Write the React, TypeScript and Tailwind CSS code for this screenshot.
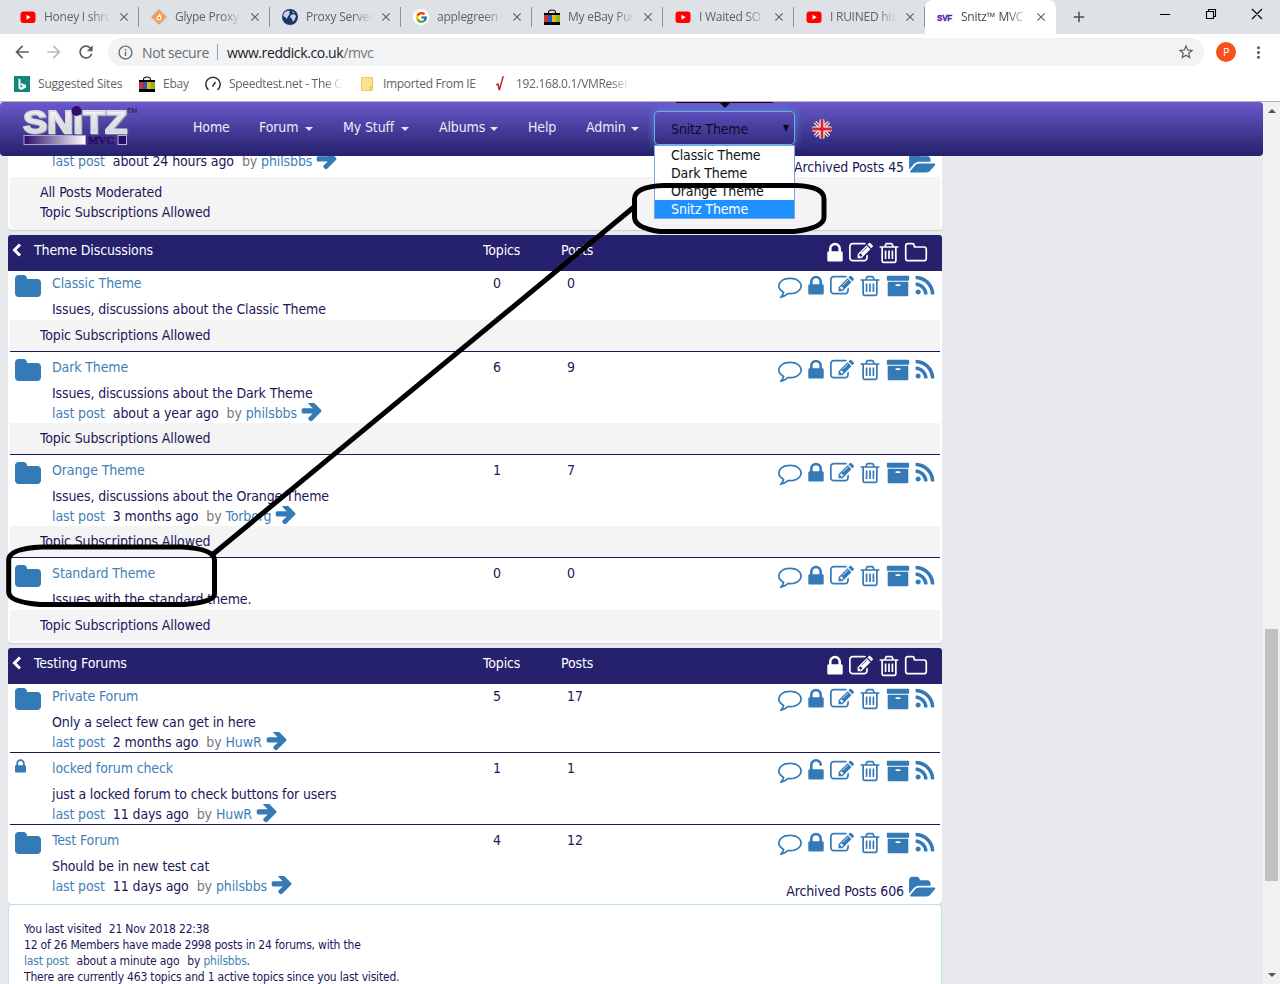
import type { ReactNode } from "react";
import { FcGoogle } from "react-icons/fc";
import { MdAdd, MdArrowBack, MdArrowForward, MdClose, MdInfoOutline, MdMoreVert, MdRefresh, MdStarBorder } from "react-icons/md";

const GLYPHS = {
  folder: "M1728 608v704q0 92-66 158t-158 66h-1216q-92 0-158-66t-66-158v-960q0-92 66-158t158-66h320q92 0 158 66t66 158v32h672q92 0 158 66t66 158z",
  folderO: "M1600 1312v-704q0-40-28-68t-68-28h-704q-40 0-68-28t-28-68v-64q0-40-28-68t-68-28h-320q-40 0-68 28t-28 68v960q0 40 28 68t68 28h1216q40 0 68-28t28-68zm128-704v704q0 92-66 158t-158 66h-1216q-92 0-158-66t-66-158v-960q0-92 66-158t158-66h320q92 0 158 66t66 158v32h672q92 0 158 66t66 158z",
  folderOpen: "M1815 952q0 31-31 66l-336 396q-43 51-120.5 86.5t-143.5 35.5h-1088q-34 0-60.5-13t-26.5-43q0-31 31-66l336-396q43-51 120.5-86.5t143.5-35.5h1088q34 0 60.5 13t26.5 43zm-343-344v160h-832q-94 0-197 47.5t-164 119.5l-337 396-5 6q0-4-.5-12.5t-.5-12.5v-960q0-92 66-158t158-66h320q92 0 158 66t66 158v32h544q92 0 158 66t66 158z",
  lock: "M640 768h512v-192q0-106-75-181t-181-75-181 75-75 181v192zm832 96v576q0 40-28 68t-68 28h-960q-40 0-68-28t-28-68v-576q0-40 28-68t68-28h32v-192q0-184 132-316t316-132 316 132 132 316v192h32q40 0 68 28t28 68z",
  unlock: "M1376 768q40 0 68 28t28 68v576q0 40-28 68t-68 28h-960q-40 0-68-28t-28-68v-576q0-40 28-68t68-28h32v-320q0-185 131.5-316.5t316.5-131.5 316.5 131.5 131.5 316.5q0 26-19 45t-45 19h-64q-26 0-45-19t-19-45q0-106-75-181t-181-75-181 75-75 181v320h736z",
  edit: "M888 1184l116-116-152-152-116 116v56h96v96h56zm440-720q-16-16-33 1l-350 350q-17 17-1 33t33-1l350-350q17-17 1-33zm80 594v190q0 119-84.5 203.5t-203.5 84.5h-832q-119 0-203.5-84.5t-84.5-203.5v-832q0-119 84.5-203.5t203.5-84.5h832q63 0 117 25 15 7 18 23 3 17-9 29l-49 49q-14 14-32 8-23-6-45-6h-832q-66 0-113 47t-47 113v832q0 66 47 113t113 47h832q66 0 113-47t47-113v-126q0-13 9-22l64-64q15-15 35-7t20 29zm-96-738l288 288-672 672h-288v-288zm444 132l-92 92-288-288 92-92q28-28 68-28t68 28l152 152q28 28 28 68t-28 68z",
  trash: "M704 736v576q0 14-9 23t-23 9h-64q-14 0-23-9t-9-23v-576q0-14 9-23t23-9h64q14 0 23 9t9 23zm256 0v576q0 14-9 23t-23 9h-64q-14 0-23-9t-9-23v-576q0-14 9-23t23-9h64q14 0 23 9t9 23zm256 0v576q0 14-9 23t-23 9h-64q-14 0-23-9t-9-23v-576q0-14 9-23t23-9h64q14 0 23 9t9 23zm128 724v-948h-896v948q0 22 7 40.5t14.5 27 10.5 8.5h832q3 0 10.5-8.5t14.5-27 7-40.5zm-672-1076h448l-48-117q-7-9-17-11h-317q-10 2-17 11zm928 32v64q0 14-9 23t-23 9h-96v948q0 83-47 143.5t-113 60.5h-832q-66 0-113-58.5t-47-141.5v-952h-96q-14 0-23-9t-9-23v-64q0-14 9-23t23-9h309l70-167q15-37 54-63t79-26h320q40 0 79 26t54 63l70 167h309q14 0 23 9t9 23z",
  archive: "M1088 832q0-26-19-45t-45-19h-256q-26 0-45 19t-19 45 19 45 45 19h256q26 0 45-19t19-45zm576-192v960q0 26-19 45t-45 19h-1408q-26 0-45-19t-19-45v-960q0-26 19-45t45-19h1408q26 0 45 19t19 45zm64-448v256q0 26-19 45t-45 19h-1536q-26 0-45-19t-19-45v-256q0-26 19-45t45-19h1536q26 0 45 19t19 45z",
  rss: "M576 1344q0 80-56 136t-136 56-136-56-56-136 56-136 136-56 136 56 56 136zm512 123q2 28-17 48-18 21-47 21h-135q-25 0-43-16.5t-20-41.5q-22-229-184.5-391.5t-391.5-184.5q-25-2-41.5-20t-16.5-43v-135q0-29 21-47 17-17 43-17h5q160 13 306 80.5t259 181.5q114 113 181.5 259t80.5 306zm512 2q2 27-18 47-18 20-46 20h-143q-26 0-44.5-17.5t-19.5-42.5q-12-215-101-408.5t-231.5-336-336-231.5-408.5-102q-25-1-42.5-19.5t-17.5-43.5v-143q0-28 20-46 18-18 44-18h3q262 13 501.5 120t425.5 294q187 186 294 425.5t120 501.5z",
  comment: "M896 384q-204 0-381.5 69.5t-282 187.5-104.5 255q0 112 71.5 213.5t201.5 175.5l87 50-27 96q-24 91-70 172 152-63 275-171l43-38 57 6q69 8 130 8 204 0 381.5-69.5t282-187.5 104.5-255-104.5-255-282-187.5-381.5-69.5zm896 512q0 174-120 321.5t-326 233-450 85.5q-70 0-145-8-198 175-460 242-49 14-114 22h-5q-15 0-27-10.5t-16-27.5v-1q-3-4-.5-12t2-10 4.5-9.5l6-9 7-8.5 8-9q7-8 31-34.5t34.5-38 31-39.500 32.500-51 27-59 26-76q-157-89-247.500-220t-90.500-281q0-130 71-248.500t191-204.500 286-136.500 348-50.500 348 50.500 286 136.500 191 204.500 71 248.500z",
  arrow: "M1600 960q0 54-37 91l-651 651q-39 37-91 37-51 0-90-37l-75-75q-38-38-38-91t38-91l293-293h-704q-52 0-84.5-37.5t-32.5-90.5v-128q0-53 32.5-90.5t84.5-37.5h704l-293-294q-38-36-38-90t38-90l75-75q38-38 90-38 53 0 91 38l651 651q37 35 37 90z",
};

function Glyph({ name, className = "size-6" }: { name: keyof typeof GLYPHS; className?: string }) {
  return (
    <svg viewBox="0 0 1792 1792" fill="currentColor" className={"block shrink-0 overflow-visible " + className}>
      <path d={GLYPHS[name]} />
    </svg>
  );
}

function YouTube() {
  return (
    <svg viewBox="0 0 16 16" className="size-4">
      <rect x="0.5" y="2.5" width="15" height="11.5" rx="3" fill="#f00" />
      <path d="M6.5 5.8v5l4.2-2.5z" fill="#fff" />
    </svg>
  );
}

function Bag() {
  return (
    <svg viewBox="0 0 16 16" className="size-4">
      <path d="M4.5 5V3.500Q4.500 1 8 1t3.500 2.500V5" fill="none" stroke="#111" strokeWidth="1.200" />
      <rect y="4" width="16" height="12" fill="#000" />
      <rect y="6" width="4" height="7" fill="#d0312d" />
      <rect x="4" y="6" width="4" height="7" fill="#1d5fc4" />
      <rect x="8" y="6" width="4" height="7" fill="#f0b20e" />
      <rect x="12" y="6" width="4" height="7" fill="#86b817" />
    </svg>
  );
}

function Glype() {
  return (
    <svg viewBox="0 0 16 16" className="size-4">
      <path d="M8 .2 15.800 8 8 15.800.2 8z" fill="#f0883a" />
      <path d="M8 2.200 13.800 8 8 13.800 2.200 8z" fill="none" stroke="#fbd9bd" strokeWidth=".8" />
      <path d="M8 4q3 2.500 2.600 5Q10 11.500 8 11.500T5.400 9Q5.500 7.500 7 6.500 8 5.500 8 4z" fill="#fff" />
      <circle cx="8" cy="9" r="1.200" fill="#f0883a" />
    </svg>
  );
}

function Globe() {
  return (
    <svg viewBox="0 0 16 16" className="size-4">
      <circle cx="8" cy="8" r="8" fill="#1f3566" />
      <path d="M2 4q3-3 6-2l-1 2 1 1-2 2-1 3-2-2-2-1zM9 6l3-1 2 2-1 3-2 3-1-3-2-2zM10 2l3 2-2 0z" fill="#c7d2e6" />
    </svg>
  );
}

function Tab({ icon, title, active }: { icon: ReactNode; title: string; active?: boolean }) {
  return (
    <div className={"flex h-[34px] w-[131px] shrink-0 items-center pl-3 " + (active ? "rounded-t-lg bg-white text-[#45494d]" : "text-[#5f6368]")}>
      <span className="w-6 shrink-0">{icon}</span>
      <span className="w-[67px] shrink-0 overflow-hidden whitespace-nowrap [mask-image:linear-gradient(to_right,#000_70%,transparent)]">{title}</span>
      <MdClose className="ml-[6px] size-[14px] shrink-0 text-[#5f6368]" />
      <span className={"ml-auto h-5 w-px " + (active ? "" : "bg-[#8f9297]")} />
    </div>
  );
}

const TABS: { icon: ReactNode; title: string }[] = [
  { icon: <YouTube />, title: "Honey I shru" },
  { icon: <Glype />, title: "Glype Proxy" },
  { icon: <Globe />, title: "Proxy Server" },
  { icon: <span className="flex size-4 items-center justify-center rounded-full bg-white"><FcGoogle className="size-[13px]" /></span>, title: "applegreen s" },
  { icon: <Bag />, title: "My eBay Pur" },
  { icon: <YouTube />, title: "I Waited SO" },
  { icon: <YouTube />, title: "I RUINED his" },
];

function Browser() {
  return (
    <header className="h-[102px] shrink-0 bg-white font-['Open_Sans',sans-serif] text-[12px] tracking-[-0.25px]">
      <div className="flex h-[34px] bg-[#dee1e6] pl-2">
        {TABS.map((t) => <Tab key={t.title} {...t} />)}
        <Tab
          active
          title="Snitz™ MVC"
          icon={
            <svg viewBox="0 0 16 16" className="size-4">
              <text x="0" y="12" textLength="15" lengthAdjust="spacingAndGlyphs" fontFamily="Liberation Sans" fontWeight="bold" fontSize="9.500" fill="#5a1fa8" stroke="#5a1fa8" strokeWidth=".4">SVF</text>
            </svg>
          }
        />
        <MdAdd className="mt-2 ml-3.5 size-[18px] text-[#4b4f53]" />
        <svg viewBox="0 0 110 34" className="ml-[65px] h-[34px] w-[110px]" fill="none" stroke="#000">
          <path d="M7 14.500h10M53.500 11.500h7v7h-7zM55.500 11.500v-2h7v7h-2M99 9l10 10M109 9l-10 10" strokeWidth="1.100" />
        </svg>
      </div>
      <div className="flex h-[36px] items-center text-[14px] tracking-[-0.4px]">
        <MdArrowBack className="ml-3 size-5 text-[#5a5e63]" />
        <MdArrowForward className="ml-3 size-5 text-[#babcbe]" />
        <MdRefresh className="ml-3 size-5 text-[#5a5e63]" />
        <div className="ml-3 flex h-7 w-[1096px] items-center rounded-full bg-[#f1f3f4] text-[#6a6e73]">
          <MdInfoOutline className="ml-[9px] size-[17px]" />
          <span className="ml-2 w-[67px] whitespace-nowrap">Not secure</span>
          <span className="ml-2 h-4 w-px bg-[#9a9da1]" />
          <span className="ml-[9px] text-[#202124]">www.reddick.co.uk<span className="text-[#73777b]">/mvc</span></span>
          <MdStarBorder className="mr-[9px] ml-auto size-[18px] text-[#5a5e63]" />
        </div>
        <span className="ml-3 flex size-5 items-center justify-center rounded-full bg-[#f4511e] text-[11px] text-white">P</span>
        <MdMoreVert className="ml-[13px] size-[19px] text-[#5a5e63]" />
      </div>
      <div className="flex h-[28px] items-center pl-[14px] whitespace-nowrap text-[#5f6368]">
        <svg viewBox="0 0 16 16" className="mr-2 size-4">
          <rect width="16" height="16" fill="#138579" />
          <path d="M4.500 2.500v10l3 1.500 4.500-2.500V9L6.500 7l1 2.500 1.500.8-2.500 1.200V3.500z" fill="#fff" />
        </svg>
        <span className="w-[101px] tracking-[-0.2px]">Suggested Sites</span>
        <Bag />
        <span className="ml-2 w-[42px]">Ebay</span>
        <svg viewBox="0 0 16 16" className="size-4" fill="none" stroke="#333" strokeWidth="1.500">
          <path d="M3.500 14A7.200 7.200 0 1 1 12.500 14M7.500 10.500l3-4.500" />
        </svg>
        <span className="ml-2 w-[113px] overflow-hidden tracking-[-0.3px] [mask-image:linear-gradient(to_right,#000_85%,transparent)]">Speedtest.net - The G</span>
        <svg viewBox="0 0 12 14" className="ml-[19px] h-[14px] w-3">
          <path d="M.5.5h11v13H.5z" fill="#fce28f" stroke="#ecca62" />
          <path d="M9 13.500V10h2.500" fill="none" stroke="#e2bb4d" />
        </svg>
        <span className="ml-[10px] w-[113px] tracking-[-0.33px]">Imported From IE</span>
        <svg viewBox="0 0 8 16" className="h-4 w-2" fill="none" stroke="#c4161c">
          <path d="M.3 9 2 8l1.300 6L7 1l.8-.3" strokeWidth="1.400" />
        </svg>
        <span className="ml-3 w-[113px] overflow-hidden tracking-[-0.3px] [mask-image:linear-gradient(to_right,#000_85%,transparent)]">192.168.0.1/VMResetF</span>
      </div>
      <div className="mt-[3px] h-px bg-[#b4b4b8]" />
    </header>
  );
}

function Logo() {
  return (
    <svg viewBox="0 0 116 42" className="mb-[4px] ml-[22px] h-[42px] w-[116px]">
      <defs>
        <linearGradient id="silver" x1="0" y1="0" x2="0" y2="1">
          <stop offset="0" stopColor="#ffffff" />
          <stop offset="1" stopColor="#c9c9d2" />
        </linearGradient>
        <linearGradient id="bar">
          <stop offset="0" stopColor="#2c0b66" />
          <stop offset="1" stopColor="#ffffff" />
        </linearGradient>
      </defs>
      <text x="1" y="27" textLength="104" lengthAdjust="spacingAndGlyphs" fontFamily="Liberation Sans" fontWeight="bold" fontSize="31" fill="url(#silver)" stroke="#dcdce4" strokeWidth="1.800" className="drop-shadow-[1px_1px_0_#77778c]">SNıTZ</text>
      <circle cx="54.500" cy="5" r="5" fill="#2f0d6e" />
      <text x="105" y="7" fontFamily="Liberation Sans" fontSize="7" fill="#151030">TM</text>
      <rect x="2" y="29.500" width="61.500" height="9" fill="url(#bar)" stroke="#a9a4d6" />
      <text x="66" y="38" textLength="26" lengthAdjust="spacingAndGlyphs" fontFamily="Liberation Serif" fontWeight="bold" fontSize="10" fill="#2c0b66" stroke="#2c0b66" strokeWidth=".4">MVC</text>
      <rect x="96" y="29.500" width="8.500" height="9" fill="#2c0b66" stroke="#b6b0da" />
    </svg>
  );
}

function Flag() {
  return (
    <svg viewBox="0 0 20 20" className="ml-[17px] size-5">
      <clipPath id="round"><circle cx="10" cy="10" r="10" /></clipPath>
      <g clipPath="url(#round)">
        <rect width="20" height="20" fill="#2a4a94" />
        <path d="M0 0l20 20M20 0 0 20" stroke="#fff" strokeWidth="3.400" />
        <path d="M0 0l20 20M20 0 0 20" stroke="#d8232f" strokeWidth="1.400" />
        <path d="M10 0v20M0 10h20" stroke="#fff" strokeWidth="5" />
        <path d="M10 0v20M0 10h20" stroke="#d8232f" strokeWidth="2.800" />
      </g>
    </svg>
  );
}

function NavItem({ label, menu, className }: { label: string; menu?: boolean; className: string }) {
  return (
    <span className={"flex shrink-0 items-center justify-between whitespace-nowrap " + className}>
      {label}
      {menu && <span className="mt-[3px] border-x-4 border-t-4 border-x-transparent border-t-[#e6e6f5]" />}
    </span>
  );
}

function Nav() {
  return (
    <nav className="relative z-10 flex h-[54px] shrink-0 items-center rounded-[4px] bg-linear-to-b from-[#6a5acd] to-[#25216c] text-[#ebebf7]">
      <Logo />
      <NavItem label="Home" className="ml-[55px] w-[66px] pb-[4px]" />
      <NavItem label="Forum" menu className="w-[54px] pb-[4px]" />
      <NavItem label="My Stuff" menu className="ml-[30px] w-[66px] pb-[4px]" />
      <NavItem label="Albums" menu className="ml-[30px] w-[59px] pb-[4px]" />
      <NavItem label="Help" className="ml-[30px] w-[28px] pb-[4px]" />
      <NavItem label="Admin" menu className="ml-[30px] w-[53px] pb-[4px]" />
      <div className="relative mb-[2px] ml-[15px] h-[34px] w-[141px] text-[#111]">
        <div className="absolute -top-[9px] left-[22px] flex w-[97px] flex-col items-center">
          <span className="h-px w-full bg-[#0b0a1c]" />
          <span className="border-x-[5px] border-t-[5px] border-x-transparent border-t-[#0b0a1c]" />
        </div>
        <div className="flex h-full items-center justify-between rounded-[4px] border border-[#66afe9] pr-[5px] pl-4 text-[#0d0a2a] shadow-[0_0_8px_rgba(102,175,233,0.6)]">
          <span className="mt-[3px]">Snitz Theme</span>
          <span className="border-x-[3.5px] border-t-[7px] border-x-transparent border-t-[#0b0a1c]" />
        </div>
        <ul className="absolute top-[34px] left-0 w-[141px] border border-[#7ba7dc] bg-white leading-[18px] text-[#111]">
          <li className="pl-4">Classic Theme</li>
          <li className="pl-4">Dark Theme</li>
          <li className="pl-4">Orange Theme</li>
          <li className="bg-[#1e90ff] pl-4 text-white">Snitz Theme</li>
        </ul>
      </div>
      <Flag />
    </nav>
  );
}

function LastPost({ when, who }: { when: string; who: string }) {
  return (
    <div className="flex h-[19px] items-start leading-[19px] whitespace-nowrap">
      <a className="text-[#3f7fb8]">last post</a>
      <span className="ml-2">{when}</span>
      <span className="ml-2 text-[#777]">by</span>
      <a className="ml-1 text-[#3f7fb8]">{who}</a>
      <svg viewBox="0 373 1792 1419" fill="#337ab7" className="-mt-px ml-[3px] h-[19px] w-6 overflow-hidden">
        <path d={GLYPHS.arrow} />
      </svg>
    </div>
  );
}

function Archived({ count }: { count: number }) {
  return (
    <div className="flex items-center justify-end pr-[7px] whitespace-nowrap">
      <span className="mt-[8px] mr-[6px]">Archived Posts {count}</span>
      <Glyph name="folderOpen" className="size-[25px] text-[#337ab7]" />
    </div>
  );
}

function CategoryHeader({ title }: { title: string }) {
  return (
    <div className="flex h-[36px] items-start rounded-t-[3px] bg-[#25216c] leading-[30px] text-white">
      <svg viewBox="0 0 10 14" className="mt-2 ml-1 h-[14px] w-[10px]" fill="none" stroke="#fff" strokeWidth="3">
        <path d="M8 1.500 2.500 7l5.500 5.500" />
      </svg>
      <span className="ml-3 w-[449px]">{title}</span>
      <span className="w-[79px]">Topics</span>
      <span className="-ml-px">Posts</span>
      <div className="mt-[5.5px] mr-[14px] ml-auto flex">
        <Glyph name="lock" className="mr-[2px] size-6" />
        <Glyph name="edit" className="mr-[4px] size-6" />
        <Glyph name="trash" className="mr-[3px] size-6" />
        <Glyph name="folderO" />
      </div>
    </div>
  );
}

type Forum = {
  name: string;
  desc: string;
  topics: number;
  posts: number;
  last?: { when: string; who: string };
  locked?: boolean;
  note?: string;
  archived?: number;
};

function ForumRow({ f, divider }: { f: Forum; divider: boolean }) {
  return (
    <div className={"mx-[2px] " + (divider ? "border-b border-[#1b1759]" : "")}>
      <div className="flex">
        <div className="w-[42px] shrink-0 pt-[5px] pl-[4px] text-[#337ab7]">
          {f.locked ? <Glyph name="lock" className="-ml-[6px] h-[17px] w-[25px]" /> : <Glyph name="folder" className="size-7" />}
        </div>
        <div className="w-[441px] shrink-0">
          <div className="h-[30px] leading-[30px]"><a className="text-[#3f7fb8]">{f.name}</a></div>
          <div className="h-[22px] leading-[22px]">{f.desc}</div>
          {f.last && <LastPost {...f.last} />}
        </div>
        <span className="w-[74px] leading-[30px]">{f.topics}</span>
        <span className="leading-[30px]">{f.posts}</span>
        <div className="mr-[3px] ml-auto">
          <div className="flex justify-end pt-[6px] text-[#337ab7]">
            <Glyph name="comment" className="-mt-[0.5px] mr-[2px] size-6" />
            <Glyph name={f.locked ? "unlock" : "lock"} className="mr-[2px] size-6" />
            <Glyph name="edit" className="mr-[4px] size-6" />
            <Glyph name="trash" className="mr-[3.5px] size-6" />
            <Glyph name="archive" className="mr-[3.500px] size-6" />
            <Glyph name="rss" className="size-6" />
          </div>
        </div>
      </div>
      {f.note && <div className="h-[31px] bg-[#f4f4f4] pl-[30px] leading-[30px]">{f.note}</div>}
      {f.archived !== undefined && <div className="-mt-[23px] -mr-[2px] h-[28px]"><Archived count={f.archived} /></div>}
    </div>
  );
}

function Category({ title, forums, className }: { title: string; forums: Forum[]; className: string }) {
  return (
    <section className={"shrink-0 rounded-[4px] bg-white shadow-[0_1px_1px_rgba(0,0,0,0.12)] " + className}>
      <CategoryHeader title={title} />
      <div className="-mt-[3px]">
        {forums.map((f, i) => <ForumRow key={f.name} f={f} divider={i < forums.length - 1} />)}
      </div>
    </section>
  );
}

const SUBS = "Topic Subscriptions Allowed";
const THEME_FORUMS: Forum[] = [
  { name: "Classic Theme", desc: "Issues, discussions about the Classic Theme", topics: 0, posts: 0, note: SUBS },
  { name: "Dark Theme", desc: "Issues, discussions about the Dark Theme", topics: 6, posts: 9, last: { when: "about a year ago", who: "philsbbs" }, note: SUBS },
  { name: "Orange Theme", desc: "Issues, discussions about the Orange Theme", topics: 1, posts: 7, last: { when: "3 months ago", who: "Torborg" }, note: SUBS },
  { name: "Standard Theme", desc: "Issues with the standard theme.", topics: 0, posts: 0, note: SUBS },
];
const TEST_FORUMS: Forum[] = [
  { name: "Private Forum", desc: "Only a select few can get in here", topics: 5, posts: 17, last: { when: "2 months ago", who: "HuwR" } },
  { name: "locked forum check", desc: "just a locked forum to check buttons for users", topics: 1, posts: 1, last: { when: "11 days ago", who: "HuwR" }, locked: true },
  { name: "Test Forum", desc: "Should be in new test cat", topics: 4, posts: 12, last: { when: "11 days ago", who: "philsbbs" }, archived: 606 },
];

export default function App() {
  return (
    <div className="relative flex h-[984px] w-[1280px] flex-col overflow-hidden bg-[#e8e9ed]">
      <Browser />
      <div className="flex min-h-0 flex-1 font-['DejaVu_Sans_Condensed','DejaVu_Sans',sans-serif] text-[14px] tracking-[-0.12px] text-[#1b1759]">
        <div className="flex min-w-0 flex-1 flex-col overflow-hidden">
          <Nav />
          <main className="flex w-[942px] flex-1 flex-col overflow-hidden pl-2">
            <section className="h-[74px] shrink-0 overflow-hidden rounded-b-[4px] bg-white shadow-[0_1px_1px_rgba(0,0,0,0.12)]">
              <div className="-mt-[6px] flex h-[27px] justify-between pl-[44px]">
                <div className="pt-[2px]"><LastPost when="about 24 hours ago" who="philsbbs" /></div>
                <Archived count={45} />
              </div>
              <div className="mx-[2px] h-[53px] bg-[#f4f4f4] pt-[5px] pl-[30px] leading-[20px]">
                <div>All Posts Moderated</div>
                <div>{SUBS}</div>
              </div>
            </section>
            <Category title="Theme Discussions" forums={THEME_FORUMS} className="mt-[5px] h-[408px]" />
            <Category title="Testing Forums" forums={TEST_FORUMS} className="mt-[5px] h-[256px]" />
            <section className="flex-1 rounded-t-[4px] border border-b-0 border-[#bce3ea] bg-white pt-[16px] pl-[15px] text-[12px] leading-[16px] tracking-[-0.19px]">
              <p>You last visited <span className="ml-1">21 Nov 2018 22:38</span></p>
              <p>12 of 26 Members have made 2998 posts in 24 forums, with the</p>
              <p><a className="text-[#3f7fb8]">last post</a><span className="ml-2">about a minute ago</span><span className="ml-2">by</span> <a className="text-[#3f7fb8]">philsbbs</a>.</p>
              <p className="whitespace-nowrap">There are currently 463 topics and 1 active topics since you last visited.</p>
            </section>
          </main>
        </div>
        <aside className="flex w-[17px] shrink-0 flex-col items-center bg-[#f1f1f1]">
          <span className="mt-[7px] border-x-4 border-b-4 border-x-transparent border-b-[#505050]" />
          <span className="mt-[516px] h-[252px] w-[13px] bg-[#c1c1c1]" />
          <span className="mt-auto mb-[7px] border-x-4 border-t-4 border-x-transparent border-t-[#505050]" />
        </aside>
      </div>
      <svg viewBox="0 0 1280 984" className="pointer-events-none absolute inset-0 z-20 size-full" fill="none" stroke="#000" strokeWidth="5" strokeLinecap="round">
        <path d="M664 185.500H796Q824 186.500 824 199V217Q824 228 794 231.500H660Q634.500 228 634.500 217V199Q634.500 186.500 664 185.500z" />
        <path d="M634 207 212 555" />
        <path d="M42 547H182Q214.500 549 214.500 560V594Q214.500 602 184 604.500H40Q8.700 602 8.700 592V560Q8.700 548.500 42 547z" />
      </svg>
    </div>
  );
}
